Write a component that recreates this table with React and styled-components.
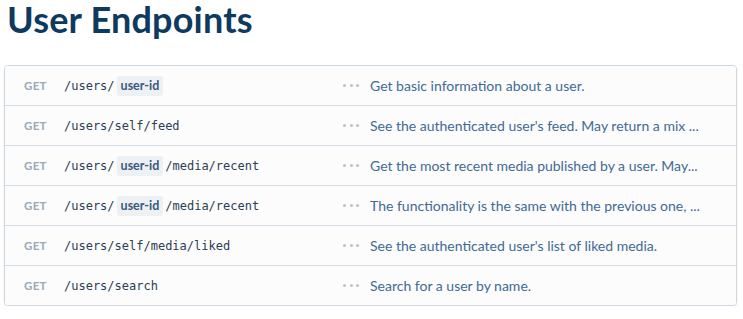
import React from 'react'
import styled, { createGlobalStyle } from 'styled-components'

const Global = createGlobalStyle`
  body {
    margin: 0;
    background: #ffffff;
    font-family: "Lato", "Open Sans", sans-serif;
  }
`

const endpoints = [
    { path: ['/users/', { param: 'user-id' }], desc: 'Get basic information about a user.' },
    { path: ['/users/self/feed'], desc: "See the authenticated user's feed. May return a mix ..." },
    { path: ['/users/', { param: 'user-id' }, '/media/recent'], desc: 'Get the most recent media published by a user. May...' },
    { path: ['/users/', { param: 'user-id' }, '/media/recent'], desc: 'The functionality is the same with the previous one, ...' },
    { path: ['/users/self/media/liked'], desc: "See the authenticated user's list of liked media." },
    { path: ['/users/search'], desc: 'Search for a user by name.' },
]

export default function App() {
    return (
        <Page>
            <Global />
            <Title>User Endpoints</Title>
            <Table>
                {endpoints.map((e, i) => (
                    <Row key={i}>
                        <Method>GET</Method>
                        <Path>
                            {e.path.map((p, j) =>
                                typeof p === 'string'
                                    ? <span key={j}>{p}</span>
                                    : <Param key={j}>{p.param}</Param>
                            )}
                        </Path>
                        <Dots>
                            <i /><i /><i />
                        </Dots>
                        <Desc>{e.desc}</Desc>
                    </Row>
                ))}
            </Table>
        </Page>
    )
}

const Page = styled.div`
  padding: 0 6px 0 4px;
`

const Title = styled.h1`
  margin: -2px 0 24px;
  padding: 0 0 0 3px;
  line-height: 43px;
  font-size: 36px;
  font-weight: 700;
  color: #0e3a5f;
  letter-spacing: 0.2px;
`

const Table = styled.div`
  border: 1px solid #cdd7e0;
  border-radius: 4px;
  overflow: hidden;
  box-shadow: 0 1px 2px rgba(0, 0, 0, 0.08);
`

const Row = styled.div`
  display: flex;
  align-items: center;
  height: 39px;
  background: #fcfcfc;
  border-top: 1px solid #d3dce4;
  &:first-child {
    border-top: none;
  }
`

const Method = styled.span`
  width: 40px;
  padding-left: 19px;
  font-size: 11.5px;
  font-weight: 700;
  color: #9aa9b7;
  letter-spacing: 0.3px;
`

const Path = styled.div`
  width: 279px;
  display: flex;
  align-items: center;
  gap: 2px;
  font-family: "DejaVu Sans Mono", monospace;
  font-size: 12px;
  color: #2b3d52;
`

const Param = styled.span`
  display: inline-flex;
  align-items: center;
  height: 20px;
  padding: 0 4px;
  background: #eef1f4;
  border-radius: 3px;
  font-family: "Lato", sans-serif;
  font-size: 12.5px;
  font-weight: 700;
  color: #36597e;
`

const Dots = styled.span`
  display: flex;
  gap: 3.7px;
  width: 27px;
  i {
    width: 3px;
    height: 3px;
    border-radius: 50%;
    background: #b8c3cd;
  }
`

const Desc = styled.span`
  white-space: nowrap;
  font-size: 14px;
  color: #3f6a93;
`
